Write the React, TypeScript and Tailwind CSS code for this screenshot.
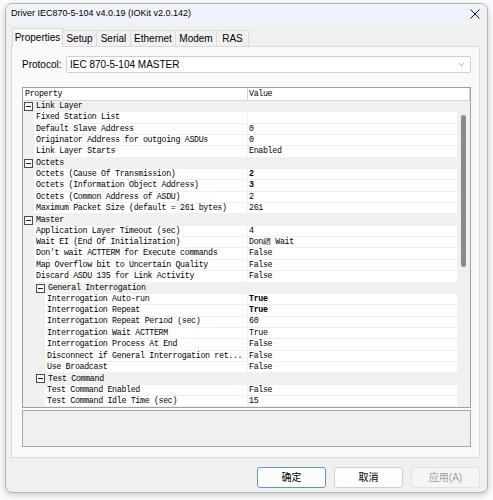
import { ChevronDown } from 'lucide-react'

type Row =
  | { kind: 'cat'; level: 1 | 2; label: string }
  | { kind: 'item'; level: 1 | 2; label: string; value: string; bold?: boolean }

const rows: Row[] = [
  { kind: 'cat', level: 1, label: 'Link Layer' },
  { kind: 'item', level: 1, label: 'Fixed Station List', value: '' },
  { kind: 'item', level: 1, label: 'Default Slave Address', value: '0' },
  { kind: 'item', level: 1, label: 'Originator Address for outgoing ASDUs', value: '0' },
  { kind: 'item', level: 1, label: 'Link Layer Starts', value: 'Enabled' },
  { kind: 'cat', level: 1, label: 'Octets' },
  { kind: 'item', level: 1, label: 'Octets (Cause Of Transmission)', value: '2', bold: true },
  { kind: 'item', level: 1, label: 'Octets (Information Object Address)', value: '3', bold: true },
  { kind: 'item', level: 1, label: 'Octets (Common Address of ASDU)', value: '2' },
  { kind: 'item', level: 1, label: 'Maximum Packet Size (default = 261 bytes)', value: '261' },
  { kind: 'cat', level: 1, label: 'Master' },
  { kind: 'item', level: 1, label: 'Application Layer Timeout (sec)', value: '4' },
  { kind: 'item', level: 1, label: 'Wait EI (End Of Initialization)', value: 'Don縉 Wait' },
  { kind: 'item', level: 1, label: "Don't wait ACTTERM for Execute commands", value: 'False' },
  { kind: 'item', level: 1, label: 'Map Overflow bit to Uncertain Quality', value: 'False' },
  { kind: 'item', level: 1, label: 'Discard ASDU 135 for Link Activity', value: 'False' },
  { kind: 'cat', level: 2, label: 'General Interrogation' },
  { kind: 'item', level: 2, label: 'Interrogation Auto-run', value: 'True', bold: true },
  { kind: 'item', level: 2, label: 'Interrogation Repeat', value: 'True', bold: true },
  { kind: 'item', level: 2, label: 'Interrogation Repeat Period (sec)', value: '60' },
  { kind: 'item', level: 2, label: 'Interrogation Wait ACTTERM', value: 'True' },
  { kind: 'item', level: 2, label: 'Interrogation Process At End', value: 'False' },
  { kind: 'item', level: 2, label: 'Disconnect if General Interrogation ret...', value: 'False' },
  { kind: 'item', level: 2, label: 'Use Broadcast', value: 'False' },
  { kind: 'cat', level: 2, label: 'Test Command' },
  { kind: 'item', level: 2, label: 'Test Command Enabled', value: 'False' },
  { kind: 'item', level: 2, label: 'Test Command Idle Time (sec)', value: '15' },
]

const tabs = [
  { name: 'Properties', w: 'w-[51px]' },
  { name: 'Setup', w: 'w-[34px]' },
  { name: 'Serial', w: 'w-[34px]' },
  { name: 'Ethernet', w: 'w-[45px]' },
  { name: 'Modem', w: 'w-[41px]' },
  { name: 'RAS', w: 'w-[32px]' },
]

function GridRow({ row }: { row: Row }) {
  if (row.kind === 'cat') {
    return (
      <div className={`flex h-[11.35px] items-center bg-[#f0f0f0] ${row.level === 1 ? 'pl-px' : 'pl-[13px]'}`}>
        <div className="flex h-[9px] w-[9px] items-center justify-center border border-[#4a4a4a] bg-[#f8f8f8]">
          <span className="h-px w-[5px] bg-[#222]" />
        </div>
        <span className="ml-[3px] whitespace-nowrap">{row.label}</span>
      </div>
    )
  }
  return (
    <div className="flex h-[11.35px]">
      <div className="flex w-[224px]">
        <div className={`${row.level === 1 ? 'w-[11px]' : 'w-[22px]'} shrink-0 bg-[#f0f0f0]`} />
        <div className="flex flex-1 items-center overflow-hidden whitespace-nowrap border-b border-[#f0f0f0] bg-white pl-[2px]">
          {row.label}
        </div>
      </div>
      <div
        className={`flex w-[210px] items-center border-b border-l border-[#f0f0f0] bg-white pl-px ${row.bold ? 'font-bold' : ''}`}
      >
        {row.value}
      </div>
    </div>
  )
}

export default function App() {
  return (
    <div className="h-[500px] w-[493px] overflow-hidden bg-[#fbfbfb] pl-[5px] pt-[3px] font-['Liberation_Sans','Noto_Sans_CJK_SC',sans-serif] text-black">
      <div className="h-[490px] w-[483px] overflow-hidden rounded-[7px] border border-[#b4b4b4] bg-[#f0f0f0] shadow-[0_2px_6px_rgba(0,0,0,0.2)]">
        {/* Title bar */}
        <div className="flex h-[21px] items-center justify-between bg-[#eef3fa] pl-[5px] pr-[7px]">
          <span className="pb-[2px] text-[9px]">Driver IEC870-5-104 v4.0.19 (IOKit v2.0.142)</span>
          <svg width="10" height="10" viewBox="0 0 10 10" className="mb-[2px]">
            <path d="M0.5 0.5 L9.5 9.5 M9.5 0.5 L0.5 9.5" stroke="#111" strokeWidth="1" />
          </svg>
        </div>

        <div className="pl-[5px] pr-[7px]">
          {/* Tabs */}
          <div className="flex h-[21px] items-end pl-px">
            {tabs.map((t, i) =>
              i === 0 ? (
                <div
                  key={t.name}
                  className={`${t.w} relative z-10 -mb-px flex h-[19px] items-center justify-center border border-b-0 border-[#d9d9d9] bg-[#f9f9f9] pb-[2px] text-[10px]`}
                >
                  {t.name}
                </div>
              ) : (
                <div
                  key={t.name}
                  className={`${t.w} flex h-[16px] items-center justify-center border-r border-t border-[#dcdcdc] bg-[#f0f0f0] text-[10px]`}
                >
                  {t.name}
                </div>
              )
            )}
          </div>

          {/* Tab panel */}
          <div className="h-[412px] border border-[#d9d9d9] bg-[#f9f9f9] pl-[10px] pt-[9px]">
            <div className="flex items-center">
              <span className="w-[44px] text-[10px]">Protocol:</span>
              <div className="flex h-[17px] w-[405px] items-center justify-between rounded-[2px] border border-[#d0d0d0] bg-white pl-[3px] pr-[4px] text-[10px]">
                <span>IEC 870-5-104 MASTER</span>
                <ChevronDown size={9} strokeWidth={1.5} className="text-[#666]" />
              </div>
            </div>

            {/* Property grid */}
            <div className="mt-[14px] flex w-[449px] flex-col font-['Liberation_Mono',monospace] text-[8.3px] tracking-[-0.33px]">
              <div className="border border-[#a0a0a0]">
                <div className="flex h-[13px] border-b border-[#d4d4d4] bg-white">
                  <div className="flex w-[224px] items-center pl-[2px]">Property</div>
                  <div className="flex flex-1 items-center border-l border-r border-[#d4d4d4] pl-px">Value</div>
                </div>
                <div className="flex">
                  <div className="w-[434px]">
                    {rows.map((r) => (
                      <GridRow key={r.label} row={r} />
                    ))}
                  </div>
                  <div className="w-[13px] bg-[#f0f0f0] pl-[4px] pt-[14px]">
                    <div className="h-[152px] w-[5px] rounded-full bg-[#8a8a8a]" />
                  </div>
                </div>
              </div>
              <div className="mt-[2px] h-[37px] border border-[#a8a8a8] bg-[#f0f0f0]" />
            </div>
          </div>

          {/* Buttons */}
          <div className="mt-[9px] flex justify-end gap-[8px] text-[10px]">
            <button className="flex h-[21px] w-[69px] items-center justify-center rounded-[3px] border border-[#5a95d6] bg-[#fdfdfd]">
              确定
            </button>
            <button className="flex h-[21px] w-[69px] items-center justify-center rounded-[3px] border border-[#d0d0d0] bg-[#fdfdfd]">
              取消
            </button>
            <button className="flex h-[21px] w-[69px] items-center justify-center rounded-[3px] border border-[#e2e2e2] bg-[#f5f5f5] text-[#a0a0a0]">
              应用(A)
            </button>
          </div>
        </div>
      </div>
    </div>
  )
}
